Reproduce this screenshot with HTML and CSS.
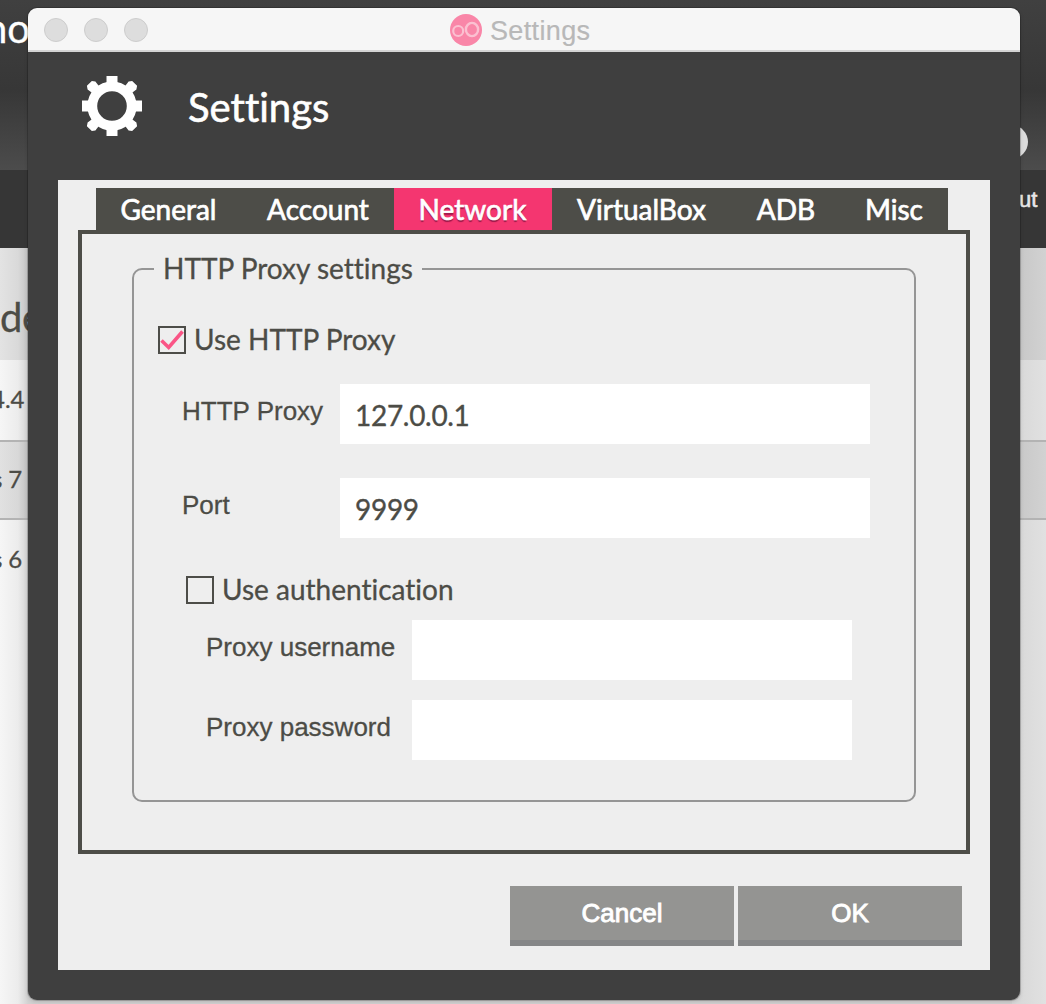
FILE: index.html
```
<!DOCTYPE html>
<html lang="en">
<head>
<meta charset="utf-8">
<title>Settings</title>
<link rel="stylesheet" href="styles.css">
</head>
<body>
<div class="backdrop">
  <div class="band brand"><div class="edge-left"><span class="brand-text">no</span></div><div class="edge-right"><svg class="disc" width="8" height="34" viewBox="0 0 8 34"><circle cx="-9" cy="17" r="17" fill="#dcdcdc"/></svg></div></div>
  <div class="band toolbar"><div class="edge-left"></div><div class="edge-right"><span class="toolbar-text">ut</span></div></div>
  <div class="band heading"><div class="edge-left"><span class="heading-text">de</span></div><div class="edge-right"></div></div>
  <div class="band device"><div class="edge-left"><span class="device-text first">4.4</span></div><div class="edge-right"></div></div>
  <div class="band device selected"><div class="edge-left"><span class="device-text">s 7 -</span></div><div class="edge-right"></div></div>
  <div class="band device"><div class="edge-left"><span class="device-text">s 6 -</span></div><div class="edge-right"></div></div>
  <div class="band rest"><div class="edge-left"></div><div class="edge-right"></div></div>
</div>

<main class="window">
  <header class="titlebar">
    <div class="lights"><i class="light"></i><i class="light"></i><i class="light"></i></div>
    <svg class="logo" width="32" height="32" viewBox="0 0 32 32">
      <circle cx="16" cy="16" r="16" fill="#f986a8"/>
      <circle cx="8.2" cy="17" r="5" fill="none" stroke="#fbc0d1" stroke-width="2.2"/>
      <ellipse cx="22" cy="15.5" rx="6.1" ry="6.6" fill="none" stroke="#fbc0d1" stroke-width="2.4"/>
    </svg>
    <span class="titlebar-text">Settings</span>
  </header>

  <div class="hero">
    <svg class="gear" width="60" height="60" viewBox="-30 -30 60 60">
      <circle r="19.7" fill="none" stroke="#fff" stroke-width="9.8"/>
      <g fill="#fff">
        <path d="M-5.5-30h11v8h-11zM-5.5 22h11v8h-11zM-30-5.5h8v11h-8zM22-5.5h8v11h-8z"/>
        <g transform="rotate(45)"><path d="M-3.5-32h7l2 3l-1 8h-9l-1-8zM-4.5 21h9l1 8l-2 3h-7l-2-3zM-32-3.5l3-2l8 1v9l-8 1l-3-2zM32-3.5l-3-2l-8 1v9l8 1l3-2z"/></g>
      </g>
    </svg>
    <h1 class="hero-title">Settings</h1>
  </div>

  <section class="content">
    <nav class="tabs">
      <a class="tab general">General</a><a class="tab account">Account</a><a class="tab network active">Network</a><a class="tab vbox">VirtualBox</a><a class="tab adb">ADB</a><a class="tab misc">Misc</a>
    </nav>
    <div class="panel">
      <fieldset class="group">
        <legend class="legend"><span class="legend-text">HTTP Proxy settings</span></legend>
        <div class="check">
          <span class="box"><svg width="24" height="24" viewBox="0 0 24 24"><path d="M1.5 12.5L8.7 19.5L22.5 3.5" fill="none" stroke="#fa5586" stroke-width="3.6"/></svg></span>
          <span class="check-text">Use HTTP Proxy</span>
        </div>
        <div class="field proxy"><span class="label">HTTP Proxy</span><div class="input">127.0.0.1</div></div>
        <div class="field port"><span class="label">Port</span><div class="input">9999</div></div>
        <div class="check auth">
          <span class="box"></span>
          <span class="check-text">Use authentication</span>
        </div>
        <div class="field sub"><span class="label">Proxy username</span><div class="input"></div></div>
        <div class="field sub"><span class="label">Proxy password</span><div class="input"></div></div>
      </fieldset>
    </div>
    <footer class="actions">
      <button class="button">Cancel</button>
      <button class="button">OK</button>
    </footer>
  </section>
</main>
</body>
</html>
```
FILE: styles.css
```
* { box-sizing: border-box; }
body {
  margin: 0;
  width: 1046px;
  height: 1004px;
  overflow: hidden;
  position: relative;
  font-family: Lato, sans-serif;
  font-variant-ligatures: none;
  -webkit-text-stroke: .3px currentColor;
  color: #4c4c46;
}
.backdrop {
  display: flex;
  flex-direction: column;
  height: 1004px;
  background: #d3d3d3;
}
.band { display: flex; justify-content: space-between; white-space: nowrap; }
.edge-left, .edge-right { overflow: hidden; display: flex; }
.edge-left { width: 36px; }
.edge-right { width: 34px; padding-left: 8px; }
.brand { height: 170px; background: linear-gradient(#404040 0, #373737 90px, #4c4c4c 170px); }
.brand-text { font-size: 40px; line-height: 48px; margin: 4px 0 0 -15px; color: #fff; }
.disc { margin-top: 125px; }
.toolbar { height: 78px; background: #363636; }
.toolbar-text { font-family: "Liberation Sans", sans-serif; font-size: 22px; line-height: 28px; color: #e8e8e8; margin: 16px 0 0 -1px; -webkit-text-stroke: .6px #e8e8e8; }
.heading { height: 112px; }
.heading .edge-left { background: linear-gradient(90deg, #e3e3e3, #d9d9d9 50%, #c3c3c3 28px); }
.heading .edge-right { background: linear-gradient(90deg, #c8c8c8 8px, #d2d2d2); }
.heading-text { font-size: 40px; line-height: 48px; margin-top: 45px; letter-spacing: -.5px; }
.device { height: 80px; }
.device .edge-left, .rest .edge-left { background: linear-gradient(90deg, #f6f6f6, #ececec 50%, #d2d2d2 28px); }
.device .edge-right, .rest .edge-right { background: linear-gradient(90deg, #d9d9d9 8px, #e1e1e1); }
.selected { border-top: 2px solid #b3b3b3; border-bottom: 2px solid #b3b3b3; }
.device.selected .edge-left { background: linear-gradient(90deg, #e1e1e1, #d8d8d8 50%, #c2c2c2 28px); }
.device.selected .edge-right { background: linear-gradient(90deg, #c9c9c9 8px, #d2d2d2); }
.device-text { font-size: 24px; line-height: 30px; margin: 24px 0 0 -8px; letter-spacing: -.2px; }
.selected .device-text { margin-top: 22px; }
.device-text.first { margin-left: -9px; letter-spacing: 0; }
.rest { flex: 1; }

.window {
  position: absolute;
  left: 28px;
  top: 8px;
  width: 992px;
  height: 992px;
  border-radius: 9px;
  overflow: hidden;
  background: #3f3f3f;
  box-shadow: 0 0 0 1px rgba(0, 0, 0, .18), 0 2px 4px rgba(0, 0, 0, .15);
}
.titlebar {
  height: 44px;
  display: flex;
  align-items: center;
  background: #f6f6f6;
  border-bottom: 2px solid #d4d4d4;
}
.lights { display: flex; gap: 16px; width: 422px; padding: 2px 0 0 16px; }
.light { width: 24px; height: 24px; border-radius: 50%; background: #ddd; border: 1px solid #cdcdcd; }
.logo { margin-top: 2px; }
.titlebar-text { font-family: "Liberation Sans", sans-serif; font-size: 27px; line-height: 32px; color: #b8b8b8; margin: 3px 0 0 8px; letter-spacing: .35px; -webkit-text-stroke: .2px #b8b8b8; }
.hero { height: 128px; display: flex; padding: 24px 0 0 54px; }
.hero-title { font-size: 40px; line-height: 48px; font-weight: 400; color: #fff; margin: 7px 0 0 46px; -webkit-text-stroke: .6px #fff; }

.content { margin: 0 30px; height: 790px; background: #eee; padding: 8px 20px 0; }
.tabs { display: flex; width: 852px; height: 42px; margin-left: 18px; background: #4d4d48; }
.tab { display: flex; justify-content: center; font-size: 28px; line-height: 34px; padding-top: 4px; color: #fff; -webkit-text-stroke: .7px #fff; }
.general { width: 145px; margin-right: 1px; }
.account { width: 152px; }
.network { width: 158px; padding-right: 1px; }
.vbox { width: 180px; padding-right: 1px; }
.adb { width: 108px; }
.misc { width: 108px; }
.active { background: #f43670; text-shadow: 0 2px 1px rgba(80, 0, 40, .55); }
.panel { height: 624px; border: 4px solid #4d4d48; padding: 18px 50px 0; }
.group { margin: 0; height: 550px; min-width: 0; border: 2px solid #959595; border-radius: 10px; padding: 40px 24px 0; }
.legend { margin-left: -4px; padding: 0 9px; font-size: 28px; line-height: 34px; }
.legend-text { position: relative; top: -1px; }
.check { display: flex; gap: 8px; height: 28px; align-items: center; font-size: 28px; line-height: 34px; }
.check-text { margin-top: -2px; }
.box { width: 28px; height: 28px; border: 2px solid #4d4d48; display: flex; }
.field { display: flex; height: 60px; }
.label { font-family: "Liberation Sans", sans-serif; font-size: 26px; line-height: 30px; padding-top: 12px; white-space: nowrap; }
.input { background: #fff; height: 60px; font-size: 28px; line-height: 34px; padding: 14px 15px; letter-spacing: -.3px; -webkit-text-stroke: .35px currentColor; }
.proxy, .port { margin-left: 24px; }
.proxy { margin-top: 30px; }
.port { margin-top: 34px; }
.proxy .label, .port .label { width: 158px; }
.proxy .input, .port .input { width: 530px; }
.auth { margin: 38px 0 16px 28px; }
.sub { margin: 0 0 20px 48px; }
.sub .label { width: 206px; }
.sub .input { width: 440px; }
.actions { display: flex; justify-content: flex-end; gap: 4px; padding: 32px 8px 0 0; }
.button {
  width: 224px;
  height: 60px;
  border: 0;
  border-bottom: 6px solid #858687;
  background: #949492;
  color: #fff;
  font-family: "Liberation Sans", sans-serif;
  font-size: 26px;
  line-height: 30px;
  -webkit-text-stroke: .9px #fff;
  padding: 0;
}
```
